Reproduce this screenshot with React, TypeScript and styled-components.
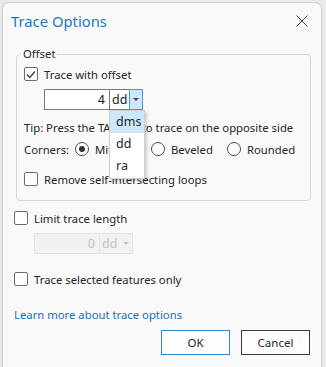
import React from 'react';
import styled, { createGlobalStyle } from 'styled-components';

const GlobalStyle = createGlobalStyle`
  html, body {
    margin: 0;
    padding: 0;
    background: #e9eaeb;
  }
  body {
    font-family: 'Noto Sans', 'Open Sans', sans-serif;
    font-size: 11.3px;
    color: #262626;
  }
`;

const Window = styled.div`
  margin: 2px 0 0 2px;
  width: 320px;
  height: 367px;
  box-sizing: border-box;
  background: #f9f9f9;
  border: 1px solid #cdcdcd;
  border-bottom: none;
  border-radius: 7px 7px 0 0;
  display: flex;
  flex-direction: column;
`;

const TitleBar = styled.div`
  height: 35px;
  display: flex;
  align-items: center;
  justify-content: space-between;
  padding: 0 13px 1px 8px;
`;

const Title = styled.div`
  font-size: 14.8px;
  color: #2179c1;
  line-height: 20px;
`;

const CloseButton = styled.button`
  border: none;
  background: transparent;
  padding: 0;
  width: 12px;
  height: 12px;
  display: flex;
`;

const Content = styled.div`
  padding: 0 11px 0 11px;
  display: flex;
  flex-direction: column;
  position: relative;
`;

const GroupBox = styled.fieldset`
  margin: 7px 0 0 2px;
  width: 295px;
  box-sizing: border-box;
  border: 1px solid #d6d6d6;
  border-radius: 4px;
  padding: 4px 7px 13px 7px;
  display: flex;
  flex-direction: column;
  position: relative;
`;

const Legend = styled.legend`
  margin-left: -3px;
  padding: 0 2px;
  line-height: 16px;
`;

const Row = styled.div<{ $mt: number; $indent?: number }>`
  display: flex;
  align-items: center;
  height: 16px;
  margin-top: ${(p) => p.$mt}px;
  margin-left: ${(p) => p.$indent ?? 0}px;
  white-space: nowrap;
`;

const FieldRow = styled.div<{ $mt: number; $indent: number }>`
  display: flex;
  margin-top: ${(p) => p.$mt}px;
  margin-left: ${(p) => p.$indent}px;
  height: 21px;
  position: relative;
`;

const NumberBox = styled.div<{ $disabled?: boolean }>`
  width: 65px;
  box-sizing: border-box;
  border: 1px solid ${(p) => (p.$disabled ? '#e2e2e2' : '#7a7a7a')};
  border-right: none;
  background: ${(p) => (p.$disabled ? '#f1f1f1' : '#ffffff')};
  color: ${(p) => (p.$disabled ? '#c4c4c4' : '#1a1a1a')};
  text-align: right;
  padding-right: 4px;
  line-height: 19px;
  font-size: 12.5px;
`;

const Combo = styled.div<{ $disabled?: boolean }>`
  display: flex;
  width: 34px;
  box-sizing: border-box;
  border: 1px solid ${(p) => (p.$disabled ? '#e2e2e2' : '#7a7a7a')};
  background: ${(p) => (p.$disabled ? '#f1f1f1' : '#ffffff')};
`;

const ComboText = styled.div<{ $disabled?: boolean }>`
  flex: 1;
  padding-left: 2px;
  line-height: 19px;
  font-size: 12.5px;
  color: ${(p) => (p.$disabled ? '#c4c4c4' : '#1a1a1a')};
`;

const ComboArrow = styled.div<{ $active?: boolean }>`
  width: 14px;
  margin: -1px -1px -1px 0;
  box-sizing: border-box;
  border: 1px solid ${(p) => (p.$active ? '#3e9be0' : 'transparent')};
  background: ${(p) => (p.$active ? '#cde8fb' : 'transparent')};
  display: flex;
  align-items: center;
  justify-content: center;
`;

const Caret = styled.div<{ $disabled?: boolean }>`
  width: 0;
  height: 0;
  border-left: 3px solid transparent;
  border-right: 3px solid transparent;
  border-top: 3px solid ${(p) => (p.$disabled ? '#c4c4c4' : '#444')};
`;

const DropList = styled.div`
  position: absolute;
  left: 65px;
  top: 21px;
  width: 36px;
  box-sizing: border-box;
  background: #ffffff;
  border: 1px solid #cfcfcf;
  box-shadow: 2px 2px 3px rgba(0, 0, 0, 0.18);
  z-index: 2;
  padding-bottom: 1px;
`;

const DropItem = styled.div<{ $selected?: boolean }>`
  height: 22px;
  line-height: 22px;
  padding-left: 6px;
  font-size: 12.5px;
  background: ${(p) => (p.$selected ? '#cde8fb' : 'transparent')};
`;

const Box = styled.span`
  width: 14px;
  height: 14px;
  box-sizing: border-box;
  border: 1px solid #6b6b6b;
  border-radius: 2px;
  background: #ffffff;
  display: inline-flex;
  align-items: center;
  justify-content: center;
  margin-right: 6px;
  flex-shrink: 0;
`;

const Radio = styled.span<{ $checked?: boolean }>`
  width: 14px;
  height: 14px;
  box-sizing: border-box;
  border: 1px solid #4a4a4a;
  border-radius: 50%;
  background: #ffffff;
  display: inline-flex;
  align-items: center;
  justify-content: center;
  margin-right: 6px;
  flex-shrink: 0;

  &::after {
    content: '';
    display: ${(p) => (p.$checked ? 'block' : 'none')};
    width: 6px;
    height: 6px;
    border-radius: 50%;
    background: #333;
  }
`;

const RadioOption = styled.span<{ $width: number }>`
  display: inline-flex;
  align-items: center;
  width: ${(p) => p.$width}px;
`;

const CornersLabel = styled.span`
  width: 51px;
`;

const Link = styled.a`
  color: #1c6fb3;
  text-decoration: none;
  height: 16px;
  line-height: 16px;
  margin-top: 20px;
  white-space: nowrap;
`;

const ButtonRow = styled.div`
  display: flex;
  justify-content: flex-end;
  gap: 11px;
  margin-top: 7px;
`;

const Button = styled.button<{ $primary?: boolean }>`
  width: 69px;
  height: 25px;
  box-sizing: border-box;
  border: 1px solid ${(p) => (p.$primary ? '#2f8ad8' : '#3a3a3a')};
  background: #fdfdfd;
  font-family: inherit;
  font-size: 11.5px;
  color: #262626;
  padding: 0;
`;

const Check = () => (
  <svg width="10" height="9" viewBox="0 0 10 9">
    <path d="M1 4.6 L3.8 7.4 L9 1.4" fill="none" stroke="#3a3a3a" strokeWidth="1.4" />
  </svg>
);

const CheckBox: React.FC<{ checked?: boolean; label: string; mt: number; indent?: number }> = ({
  checked,
  label,
  mt,
  indent,
}) => (
  <Row $mt={mt} $indent={indent}>
    <Box>{checked && <Check />}</Box>
    {label}
  </Row>
);

const UnitField: React.FC<{ value: string; disabled?: boolean; open?: boolean; mt: number; indent: number }> = ({
  value,
  disabled,
  open,
  mt,
  indent,
}) => (
  <FieldRow $mt={mt} $indent={indent}>
    <NumberBox $disabled={disabled}>{value}</NumberBox>
    <Combo $disabled={disabled}>
      <ComboText $disabled={disabled}>dd</ComboText>
      <ComboArrow $active={open}>
        <Caret $disabled={disabled} />
      </ComboArrow>
    </Combo>
    {open && (
      <DropList>
        <DropItem $selected>dms</DropItem>
        <DropItem>dd</DropItem>
        <DropItem>ra</DropItem>
      </DropList>
    )}
  </FieldRow>
);

export default function App() {
  return (
    <>
      <GlobalStyle />
      <Window>
        <TitleBar>
          <Title>Trace Options</Title>
          <CloseButton title="Close">
            <svg width="12" height="12" viewBox="0 0 12 12">
              <path d="M0.5 0.5 L11.5 11.5 M11.5 0.5 L0.5 11.5" stroke="#444" strokeWidth="1" />
            </svg>
          </CloseButton>
        </TitleBar>
        <Content>
          <GroupBox>
            <Legend>Offset</Legend>
            <CheckBox checked label="Trace with offset" mt={0} />
            <UnitField value="4" open mt={7} indent={20} />
            <Row $mt={9}>Tip: Press the TAB key to trace on the opposite side</Row>
            <Row $mt={6}>
              <CornersLabel>Corners:</CornersLabel>
              <RadioOption $width={76}>
                <Radio $checked />
                Mitered
              </RadioOption>
              <RadioOption $width={76}>
                <Radio />
                Beveled
              </RadioOption>
              <RadioOption $width={70}>
                <Radio />
                Rounded
              </RadioOption>
            </Row>
            <CheckBox label="Remove self-intersecting loops" mt={14} />
          </GroupBox>
          <CheckBox label="Limit trace length" mt={9} />
          <UnitField value="0" disabled mt={7} indent={20} />
          <CheckBox label="Trace selected features only" mt={17} />
          <Link href="#">Learn more about trace options</Link>
          <ButtonRow>
            <Button $primary>OK</Button>
            <Button>Cancel</Button>
          </ButtonRow>
        </Content>
      </Window>
    </>
  );
}
